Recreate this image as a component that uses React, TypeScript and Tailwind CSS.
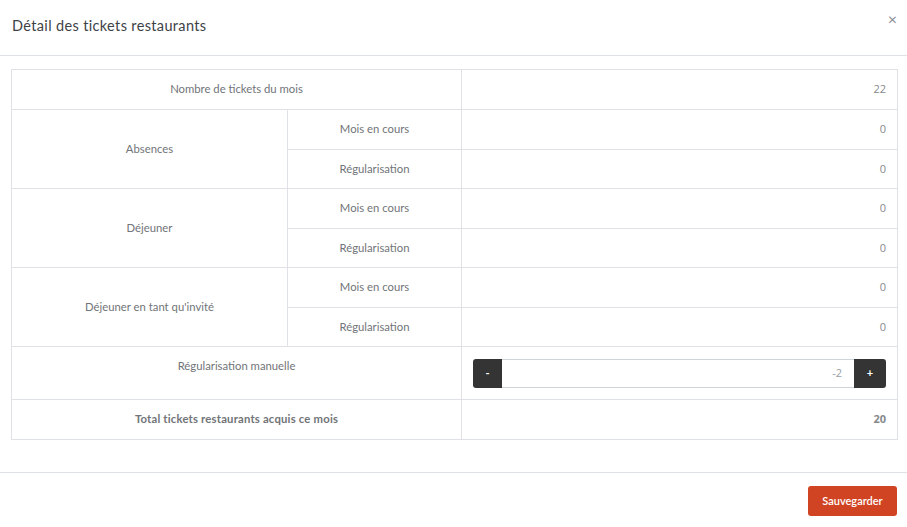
import React from 'react'

const font = { fontFamily: 'Lato, "Noto Sans", sans-serif' }

const cell = 'border border-[#dee2e6] text-center align-middle text-[11.3px] text-[#717478]'
const num = "border border-[#dee2e6] text-right align-middle pr-[11px] text-[11px] text-[#86898c] font-['Open_Sans',sans-serif]"

const groups = [
  { label: 'Absences', values: ['0', '0'] },
  { label: 'Déjeuner', values: ['0', '0'] },
  { label: "Déjeuner en tant qu'invité", values: ['0', '0'] },
]

export default function App() {
  return (
    <div className="w-[907px] h-[527px] bg-white flex flex-col" style={font}>
      {/* En-tête */}
      <div className="h-[56px] border-b border-[#dee2e6] flex items-center justify-between pl-[12px] pr-[10px] shrink-0">
        <h1 className="text-[14.5px] text-[#3d4247] tracking-[0.35px] -mt-[4px]">Détail des tickets restaurants</h1>
        <button className="text-[#8a8f94] text-[16px] leading-none -mt-[17px]">×</button>
      </div>

      {/* Tableau */}
      <div className="px-[11px] pt-[13px] h-[416px] shrink-0">
        <table className="w-[886px] border-collapse table-fixed">
          <colgroup>
            <col className="w-[276px]" />
            <col className="w-[174px]" />
            <col className="w-[436px]" />
          </colgroup>
          <tbody>
            <tr className="h-[40px]">
              <td colSpan={2} className={cell}>Nombre de tickets du mois</td>
              <td className={num}>22</td>
            </tr>
            {groups.map((g) => (
              <React.Fragment key={g.label}>
                <tr className="h-[40px]">
                  <td rowSpan={2} className={cell}>{g.label}</td>
                  <td className={cell}>Mois en cours</td>
                  <td className={num}>{g.values[0]}</td>
                </tr>
                <tr className="h-[39px]">
                  <td className={cell}>Régularisation</td>
                  <td className={num}>{g.values[1]}</td>
                </tr>
              </React.Fragment>
            ))}
            <tr className="h-[53px]">
              <td colSpan={2} className={`${cell} align-top pt-[11px]`}>Régularisation manuelle</td>
              <td className="border border-[#dee2e6] px-[11px]">
                <div className="flex h-[29px]">
                  <button className="w-[29px] bg-[#343434] text-white text-[11px] rounded-l-[3px] font-bold">-</button>
                  <div className="flex-1 border-y border-[#ced4da] flex items-center justify-end pr-[12px] text-[11px] text-[#9a9ea3] font-['Open_Sans',sans-serif]">-2</div>
                  <button className="w-[32px] bg-[#343434] text-white text-[11px] rounded-r-[3px] font-bold">+</button>
                </div>
              </td>
            </tr>
            <tr className="h-[40px]">
              <td colSpan={2} className={`${cell} font-bold text-[#5f6265] tracking-[0.2px]`}>Total tickets restaurants acquis ce mois</td>
              <td className={`${num} font-bold text-[#5f6265]`}>20</td>
            </tr>
          </tbody>
        </table>
      </div>

      {/* Pied */}
      <div className="border-t border-[#dee2e6] flex justify-end pr-[10px] pt-[13px]">
        <button className="h-[30px] w-[89px] bg-[#d04423] text-white text-[11px] rounded-[3px] font-semibold">Sauvegarder</button>
      </div>
    </div>
  )
}
